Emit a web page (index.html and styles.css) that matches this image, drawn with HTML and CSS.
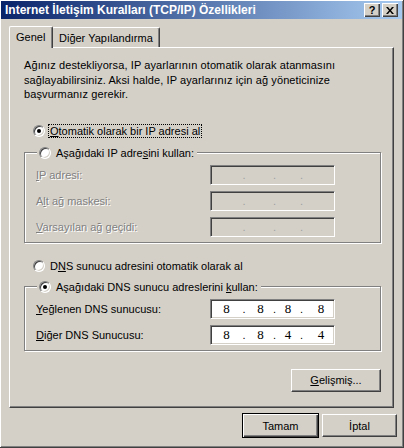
FILE: index.html
```html
<!DOCTYPE html>
<html lang="tr">
<head>
  <meta charset="UTF-8" />
  <title>Internet İletişim Kuralları (TCP/IP) Özellikleri</title>
  <link rel="stylesheet" href="styles.css">
</head>
<body>
  <div class="dialog">
    <div class="titlebar">
      <span class="title">Internet İletişim Kuralları (TCP/IP) Özellikleri</span>
      <span class="caption-btn">?</span>
      <span class="caption-btn close">
        <svg width="8" height="7" viewBox="0 0 8 7"><path d="M0 0h2l2 2.5 2-2.5h2l-3 3.5 3 3.5h-2l-2-2.5-2 2.5h-2l3-3.5z" fill="#000"/></svg>
      </span>
    </div>

    <div class="tabs">
      <span class="tab active">Genel</span>
      <span class="tab">Diğer Yapılandırma</span>
    </div>

    <div class="panel">
      <p class="intro">Ağınız destekliyorsa, IP ayarlarının otomatik olarak atanmasını sağlayabilirsiniz. Aksi halde, IP ayarlarınız için ağ yöneticinize başvurmanız gerekir.</p>

      <div class="option first">
        <span class="radio checked"></span>
        <span class="focus"><u>O</u>tomatik olarak bir IP adresi al</span>
      </div>

      <fieldset class="group ip-group">
        <legend class="option">
          <span class="radio"></span>
          <span>Aşağıdaki IP adre<u>s</u>ini kullan:</span>
        </legend>
        <div class="row disabled">
          <span class="label"><u>I</u>P adresi:</span>
          <span class="ipbox off"><i></i><b>.</b><i></i><b>.</b><i></i><b>.</b><i></i></span>
        </div>
        <div class="row disabled">
          <span class="label">A<u>l</u>t ağ maskesi:</span>
          <span class="ipbox off"><i></i><b>.</b><i></i><b>.</b><i></i><b>.</b><i></i></span>
        </div>
        <div class="row disabled">
          <span class="label"><u>V</u>arsayılan ağ geçidi:</span>
          <span class="ipbox off"><i></i><b>.</b><i></i><b>.</b><i></i><b>.</b><i></i></span>
        </div>
      </fieldset>

      <div class="option dns-auto">
        <span class="radio"></span>
        <span>D<u>N</u>S sunucu adresini otomatik olarak al</span>
      </div>

      <fieldset class="group dns-group">
        <legend class="option">
          <span class="radio checked"></span>
          <span>Aşağıdaki DNS sunucu adreslerini <u>k</u>ullan:</span>
        </legend>
        <div class="row">
          <span class="label"><u>Y</u>eğlenen DNS sunucusu:</span>
          <span class="ipbox"><i>8</i><b>.</b><i>8</i><b>.</b><i>8</i><b>.</b><i>8</i></span>
        </div>
        <div class="row">
          <span class="label"><u>D</u>iğer DNS Sunucusu:</span>
          <span class="ipbox"><i>8</i><b>.</b><i>8</i><b>.</b><i>4</i><b>.</b><i>4</i></span>
        </div>
      </fieldset>

      <div class="advanced">
        <button class="btn"><u>G</u>elişmiş...</button>
      </div>
    </div>

    <div class="footer">
      <button class="btn default">Tamam</button>
      <button class="btn">İptal</button>
    </div>
  </div>
</body>
</html>
```

FILE: styles.css
```css
body {
  margin: 0;
  background: #d4d0c8;
}
.dialog {
  width: 404px;
  height: 448px;
  box-sizing: border-box;
  background: #d4d0c8;
  border-right: 1px solid #404040;
  border-bottom: 1px solid #404040;
  box-shadow: inset 1px 1px 0 #fff, inset -1px -1px 0 #808080;
  padding: 1px 3px 0 3px;
  font-family: "Liberation Sans", Arial, sans-serif;
  font-size: 11px;
  color: #000;
  display: flex;
  flex-direction: column;
}
.titlebar {
  height: 18px;
  margin: 0 -2px 0 -2px;
  background: linear-gradient(to right, #0a246a, #a6caf0);
  display: flex;
  align-items: center;
  padding: 0 4px 0 4px;
}
.title {
  flex: 1;
  color: #fff;
  font-weight: bold;
  font-size: 12px;
}
.caption-btn {
  width: 16px;
  height: 14px;
  box-sizing: border-box;
  background: #d4d0c8;
  box-shadow: inset 1px 1px 0 #fff, inset -1px -1px 0 #404040, inset -2px -2px 0 #808080;
  display: flex;
  align-items: center;
  justify-content: center;
  font-weight: bold;
  font-size: 11px;
  line-height: 1;
}
.caption-btn.close {
  margin-left: 2px;
}

.tabs {
  display: flex;
  align-items: flex-end;
  height: 28px;
  padding-left: 6px;
}
.tab {
  height: 19px;
  padding: 0 6px;
  display: flex;
  align-items: center;
  border-top: 1px solid #fff;
  border-left: 1px solid #fff;
  border-right: 1px solid #404040;
  box-shadow: inset -1px 0 0 #808080;
  border-radius: 2px 2px 0 0;
}
.tab.active {
  height: 22px;
  margin-bottom: -1px;
  padding: 0 6px 2px 6px;
  box-sizing: border-box;
  width: 44px;
  background: #d4d0c8;
  position: relative;
  z-index: 1;
  margin-right: -1px;
}

.panel {
  height: 361px;
  box-sizing: border-box;
  margin: 0 6px 0 6px;
  border-top: 1px solid #fff;
  border-left: 1px solid #fff;
  border-right: 1px solid #404040;
  border-bottom: 1px solid #404040;
  box-shadow: inset -1px -1px 0 #808080;
  padding: 10px 14px 0 14px;
}
.intro {
  margin: 0;
  line-height: 14.5px;
  width: 330px;
  letter-spacing: 0.1px;
}

.option {
  display: flex;
  align-items: center;
  height: 16px;
}
.option.first {
  margin: 21px 0 0 9px;
}
.radio {
  width: 12px;
  height: 12px;
  box-sizing: border-box;
  border-radius: 50%;
  background: #fff;
  border: 1px solid;
  border-color: #808080 #fff #fff #808080;
  box-shadow: inset 1px 1px 0 #404040, inset -1px -1px 0 #d4d0c8;
  margin-right: 5px;
  display: flex;
  align-items: center;
  justify-content: center;
  flex-shrink: 0;
}
.radio.checked::after {
  content: "";
  width: 4px;
  height: 4px;
  border-radius: 50%;
  background: #000;
}
.focus {
  outline: 1px dotted #000;
  padding: 0 1px;
  margin-left: -1px;
}

.group {
  margin: 6px 0 0 0;
  border: 1px solid #808080;
  box-shadow: inset 1px 1px 0 #fff, 1px 1px 0 #fff;
  padding: 4px 0 5px 11px;
  width: 357px;
  box-sizing: border-box;
}
.group legend {
  margin-left: 1px;
  padding: 0 3px 0 2px;
  background: #d4d0c8;
}
.row {
  display: flex;
  align-items: center;
  justify-content: space-between;
  height: 20px;
  margin-top: 6px;
  padding-right: 45px;
}
.row:first-of-type {
  margin-top: 0;
}
.disabled .label {
  color: #808080;
  text-shadow: 1px 1px 0 #fff;
}
.ipbox {
  width: 125px;
  height: 20px;
  box-sizing: border-box;
  background: #fff;
  border: 1px solid;
  border-color: #808080 #fff #fff #808080;
  box-shadow: inset 1px 1px 0 #404040, inset -1px -1px 0 #d4d0c8;
  display: grid;
  grid-template-columns: 17px 18px 15px 13px 14px 13px 1fr;
  align-items: center;
  padding: 0 0 0 7px;
  font-family: "Liberation Serif", "Times New Roman", serif;
  font-size: 13px;
}
.ipbox.off {
  background: #d4d0c8;
  color: #a0a0a0;
}
.ipbox i,
.ipbox b {
  font-style: normal;
  font-weight: normal;
  text-align: center;
}
.ipbox b {
  font-family: "Liberation Sans", Arial, sans-serif;
  font-size: 11px;
}

.option.dns-auto {
  margin: 15px 0 0 9px;
}
.dns-group {
  margin-top: 5px;
}

.advanced {
  display: flex;
  justify-content: flex-end;
  margin-top: 18px;
  width: 357px;
}
.btn {
  font-family: "Liberation Sans", Arial, sans-serif;
  font-size: 11px;
  color: #000;
  background: #d4d0c8;
  width: 75px;
  height: 23px;
  border: 1px solid;
  border-color: #fff #404040 #404040 #fff;
  box-shadow: inset -1px -1px 0 #808080;
  padding: 0;
}
.advanced .btn {
  width: 90px;
}
.footer {
  display: flex;
  justify-content: flex-end;
  align-items: center;
  gap: 3px;
  margin-top: 5px;
  padding-right: 3px;
}
.btn.default {
  width: 77px;
  height: 25px;
  border: 1px solid #000;
  box-shadow: inset 1px 1px 0 #fff, inset -1px -1px 0 #404040, inset -2px -2px 0 #808080;
}
```
